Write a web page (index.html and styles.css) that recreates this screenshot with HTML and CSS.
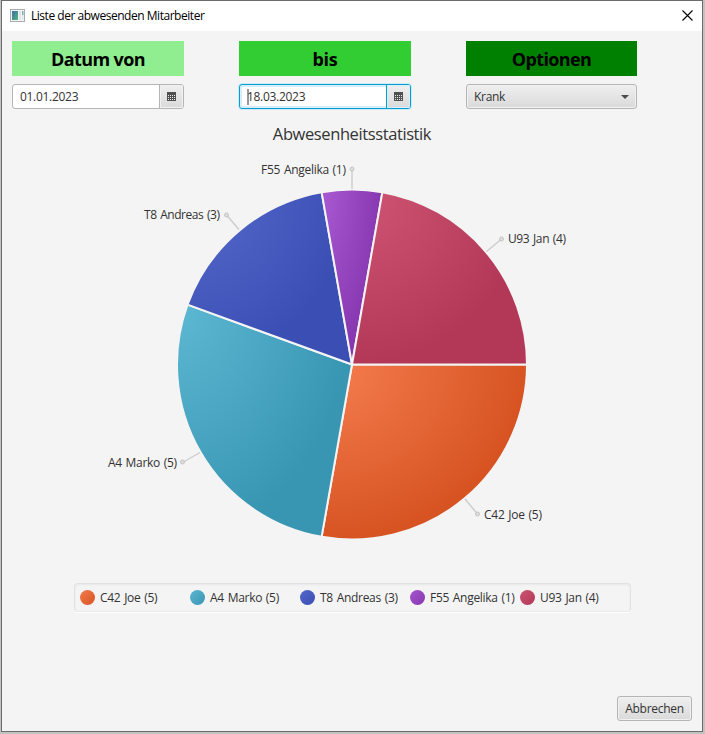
FILE: index.html
```html
<!DOCTYPE html>
<html lang="de">
<head>
<meta charset="utf-8">
<title>Liste der abwesenden Mitarbeiter</title>
<link rel="stylesheet" href="styles.css">
</head>
<body>
<div class="window">
  <header class="titlebar">
    <svg class="app-icon" width="15" height="13" viewBox="0 0 15 13">
      <defs><linearGradient id="ico" x1="0" y1="0" x2="1" y2="1"><stop offset="0" stop-color="#3b6fa8"/><stop offset="1" stop-color="#55b47c"/></linearGradient></defs>
      <rect x=".5" y=".5" width="14" height="12" fill="#f4f6f6" stroke="#a9adb0"/>
      <rect x="2" y="2" width="6" height="9" fill="url(#ico)"/>
      <rect x="9" y="2" width="2" height="9" fill="#dfe5e5"/><rect x="12" y="2" width="1.500" height="4" fill="#7fb0ad"/><rect x="12" y="6" width="1.500" height="5" fill="#dfe5e5"/>
    </svg>
    <span class="title">Liste der abwesenden Mitarbeiter</span>
    <svg class="close" width="11" height="11" viewBox="0 0 11 11"><path d="M.5 .5L10.500 10.500M10.500 .5L.5 10.500" stroke="#000" stroke-width="1.100"/></svg>
  </header>
  <main class="content">
    <section class="filters">
      <div class="filter">
        <h2 class="head light">Datum von</h2>
        <div class="picker"><span class="value">01.01.2023</span><span class="cal"><svg width="9" height="9" viewBox="0 0 9 9"><path fill="#505050" d="M0 0h9v9H0z"/><path stroke="#e8e8e8" stroke-dasharray="1 1" d="M1 3.500h7M1 5.500h7M1 7.500h7"/></svg></span></div>
      </div>
      <div class="filter">
        <h2 class="head lime">bis</h2>
        <div class="picker focused"><span class="value"><i class="caret"></i>18.03.2023</span><span class="cal"><svg width="9" height="9" viewBox="0 0 9 9"><path fill="#505050" d="M0 0h9v9H0z"/><path stroke="#e8e8e8" stroke-dasharray="1 1" d="M1 3.500h7M1 5.500h7M1 7.500h7"/></svg></span></div>
      </div>
      <div class="filter narrow">
        <h2 class="head green">Optionen</h2>
        <div class="combo"><span>Krank</span><svg width="8" height="4" viewBox="0 0 8 4"><path d="M0 0h8L4 4z" fill="#4b4b4b"/></svg></div>
      </div>
    </section>
    <h1 class="chart-title"><span>Abwesenheitsstatistik</span></h1>
    <svg class="chart" width="700" height="400" viewBox="2 150 700 400">
      <defs>
        <radialGradient id="g0" cx="0" cy="0" r="1" fx="0" fy="0"><stop offset="0" stop-color="#f67e51"/><stop offset="1" stop-color="#d75422"/></radialGradient>
        <radialGradient id="g1" cx="0" cy="0" r="1" fx="0" fy="0"><stop offset="0" stop-color="#5db8d3"/><stop offset="1" stop-color="#3996b3"/></radialGradient>
        <radialGradient id="g2" cx="0" cy="0" r="1" fx="0" fy="0"><stop offset="0" stop-color="#566bcd"/><stop offset="1" stop-color="#3b4eb4"/></radialGradient>
        <radialGradient id="g3" cx="0" cy="0" r="1" fx="0" fy="0"><stop offset="0" stop-color="#a95ad2"/><stop offset="1" stop-color="#8738b0"/></radialGradient>
        <radialGradient id="g4" cx="0" cy="0" r="1" fx="0" fy="0"><stop offset="0" stop-color="#d05676"/><stop offset="1" stop-color="#b33858"/></radialGradient>
      </defs>
      <g class="slices">
        <path fill="url(#g0)" d="M352 364.500H527A175 175 0 0 1 321.610 536.840Z"/>
        <path fill="url(#g1)" d="M352 364.500L321.610 536.840A175 175 0 0 1 187.550 304.650Z"/>
        <path fill="url(#g2)" d="M352 364.500L187.550 304.650A175 175 0 0 1 321.610 192.160Z"/>
        <path fill="url(#g3)" d="M352 364.500L321.610 192.160A175 175 0 0 1 382.390 192.160Z"/>
        <path fill="url(#g4)" d="M352 364.500L382.390 192.160A175 175 0 0 1 527 364.500Z"/>
      </g>
      <g class="leaders">
        <path d="M352 189V169M486.500 251.500L501.500 239M465 499L477.500 514M200 452.500L182.500 462.500M239 229.500L226.500 215"/>
        <circle cx="352" cy="169" r="2"/><circle cx="501.500" cy="239" r="2"/><circle cx="477.500" cy="514" r="2"/><circle cx="182.500" cy="462" r="2"/><circle cx="226.500" cy="215" r="2"/>
      </g>
      <g class="labels">
        <text x="261" y="174" textLength="85">F55 Angelika (1)</text>
        <text x="508" y="243" textLength="58">U93 Jan (4)</text>
        <text x="484" y="519" textLength="58">C42 Joe (5)</text>
        <text x="108" y="467" textLength="69">A4 Marko (5)</text>
        <text x="144" y="219" textLength="76">T8 Andreas (3)</text>
      </g>
    </svg>
    <ul class="legend">
      <li><i class="dot c0"></i><span>C42 Joe (5)</span></li>
      <li><i class="dot c1"></i><span>A4 Marko (5)</span></li>
      <li><i class="dot c2"></i><span>T8 Andreas (3)</span></li>
      <li><i class="dot c3"></i><span>F55 Angelika (1)</span></li>
      <li><i class="dot c4"></i><span>U93 Jan (4)</span></li>
    </ul>
    <footer><button class="cancel">Abbrechen</button></footer>
  </main>
</div>
</body>
</html>
```
FILE: styles.css
```css
* { box-sizing: border-box; }
body { margin: 0; width: 705px; height: 734px; overflow: hidden; background: #c2c2c2; font: 12px/16px "Open Sans", "Noto Sans", sans-serif; color: #333; letter-spacing: -.3px; }
.window { width: 702px; height: 732px; margin-left: 1px; border: 1px solid #6c6c6c; background: #f4f4f4; display: flex; flex-direction: column; }
.titlebar { height: 30px; flex: none; background: #fff; display: flex; align-items: center; padding: 0 9px 0 8px; color: #000; }
.app-icon { margin-top: -2px; }
.close { margin-top: -1px; }
.title { margin-left: 6px; flex: 1; letter-spacing: -.47px; }
.content { display: flex; flex-direction: column; flex: 1; }
.filters { display: flex; gap: 55px; padding: 10px 0 0 10px; }
.filter { width: 172px; }
.narrow { width: 171px; }
.head { margin: 0 0 8px; height: 35px; font-size: 18px; line-height: 37px; text-align: center; color: #000; letter-spacing: -.6px; }
.light { background: #90ee90; }
.lime { background: #32cd32; letter-spacing: -.2px; }
.green { background: #008000; }
.picker, .combo { height: 25px; border: 1px solid #b5b5b5; border-radius: 3px; display: flex; background: #fff; }
.value { flex: 1; padding-left: 7px; line-height: 24px; }
.cal { width: 24px; border-left: 1px solid #b5b5b5; background: linear-gradient(#efefef, #dadada); box-shadow: inset 0 0 0 1px #f1f1f1; border-radius: 0 2px 2px 0; display: flex; align-items: center; justify-content: center; }
.focused { border-color: #039ed3; box-shadow: 0 0 0 1px #cfeaf4, inset 0 0 0 2px #d9eff7; }
.focused .cal { border-color: #039ed3; box-shadow: inset 0 0 0 1px #d9eff7; }
.caret { display: inline-block; width: 2px; height: 16px; margin-right: -2px; background: #999; vertical-align: -4px; }
.combo { background: linear-gradient(#efefef, #dadada); box-shadow: inset 0 0 0 1px #f1f1f1; align-items: center; justify-content: space-between; padding: 0 7px; }
.chart-title { margin: 12px 0 0; height: 29px; font-weight: 400; font-size: 16.5px; line-height: 26px; text-align: center; letter-spacing: -.4px; }
.chart { display: block; }
.slices path { stroke: #f4f4f4; stroke-width: 2; stroke-linejoin: round; }
.leaders path { stroke: #ccc; stroke-width: 1.4; fill: none; }
.leaders circle { fill: #ddd; stroke: #c4c4c4; }
.labels text { fill: #333; letter-spacing: 0; word-spacing: 1px; }
.legend { list-style: none; margin: 33px 0 0 72px; padding: 0 5px; width: 557px; height: 29px; border: 1px solid #e1e1e1; border-bottom-color: #e8e8e8; border-radius: 4px; box-shadow: 0 1px 0 #fff, inset 0 1px 2px #e8e8e8; display: grid; grid-template-columns: repeat(5, 110px); align-items: center; word-spacing: 1px; }
.legend li { display: flex; align-items: center; gap: 5px; white-space: nowrap; }
.dot { width: 15px; height: 15px; border-radius: 50%; }
.c0 { background: linear-gradient(135deg, #f37b4d, #d75422); }
.c1 { background: linear-gradient(135deg, #5ab6d0, #3996b3); }
.c2 { background: linear-gradient(135deg, #5366c8, #3b4eb4); }
.c3 { background: linear-gradient(135deg, #a556cd, #8738b0); }
.c4 { background: linear-gradient(135deg, #cb5372, #b33858); }
footer { display: flex; justify-content: flex-end; margin-top: auto; padding: 0 10px 10px 0; }
.cancel { width: 75px; height: 25px; padding: 0; font: inherit; letter-spacing: -.3px; color: #333; border: 1px solid #b5b5b5; border-radius: 3px; background: linear-gradient(#efefef, #dadada); box-shadow: inset 0 0 0 1px #f1f1f1; }
```
